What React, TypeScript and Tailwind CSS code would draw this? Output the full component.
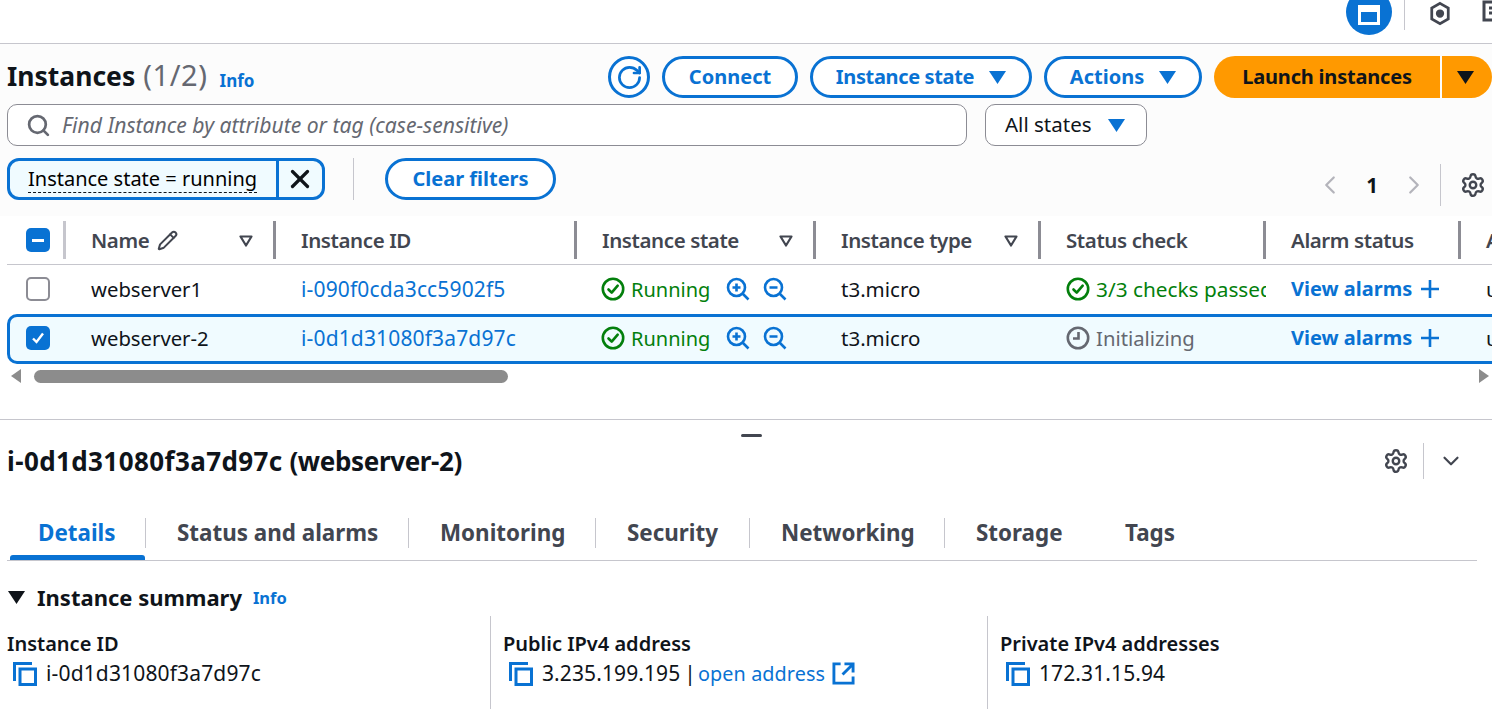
import { Settings, ChevronLeft, ChevronRight, ChevronDown, Pencil, Search, X, RotateCw } from "lucide-react";
import type { ReactNode } from "react";

const Caret = ({ className = "" }: { className?: string }) => (
  <svg viewBox="0 0 17 13" className={`w-[17px] h-[13px] shrink-0 ${className}`} fill="currentColor">
    <path d="M0 0h17L8.5 13z" />
  </svg>
);

const SortCaret = () => (
  <svg viewBox="0 0 14 12" className="w-[14px] h-[12px] text-[#424650] translate-y-[1px]" fill="none" stroke="currentColor" strokeWidth="2.2">
    <path d="M1.5 1.5h11L7 10.5z" strokeLinejoin="round" />
  </svg>
);

const CheckCircle = () => (
  <svg viewBox="0 0 24 24" className="w-[24px] h-[24px] shrink-0" fill="none" stroke="#037f0c" strokeWidth="2.6">
    <circle cx="12" cy="12" r="10.2" />
    <path d="M7.5 12.5l3.2 3.2 6-7" strokeLinecap="round" strokeLinejoin="round" />
  </svg>
);

const ZoomIcon = ({ plus }: { plus?: boolean }) => (
  <svg viewBox="0 0 24 24" className="w-[24px] h-[24px] shrink-0" fill="none" stroke="#0972d3" strokeWidth="2.6">
    <circle cx="10.5" cy="10.5" r="8.5" />
    <path d="M17 17l5.5 5.5M6.5 10.5h8" />
    {plus && <path d="M10.5 6.5v8" />}
  </svg>
);

const CopyIcon = () => (
  <svg viewBox="0 0 24 24" className="w-[24px] h-[24px] shrink-0" fill="none" stroke="#0972d3" strokeWidth="3">
    <path d="M1.5 19V1.5H19" />
    <rect x="7" y="7" width="15.5" height="15.5" />
  </svg>
);

const OutlineButton = ({ children, className = "" }: { children: ReactNode; className?: string }) => (
  <div className={`h-[42px] flex items-center justify-center gap-[15px] rounded-full border-[3px] border-[#0972d3] text-[#0972d3] font-bold text-[20px] bg-white ${className}`}>
    {children}
  </div>
);

const HeaderCell = ({ label, width, sort, icon }: { label: string; width: string; sort?: boolean; icon?: boolean }) => (
  <div className={`${width} shrink-0 flex items-center h-[38px] border-r-[3px] border-[#8c8c94] pl-[25px] pr-[20px] justify-between`}>
    <span className="flex items-center gap-[8px] font-semibold text-[#424650] whitespace-nowrap tracking-[-0.4px]">
      {label}
      {icon && <Pencil size={21} strokeWidth={2.3} />}
    </span>
    {sort && <SortCaret />}
  </div>
);

const Columns = ["w-[210px]", "w-[301px]", "w-[239px]", "w-[225px]", "w-[225px]", "w-[195px]"];

const Row = ({ name, id, selected }: { name: string; id: string; selected?: boolean }) => (
  <div className={`flex items-center whitespace-nowrap ${selected ? "h-[50px] border-y-[3px] border-l-[3px] border-[#0972d3] rounded-l-[10px] bg-[#f0fbff] pl-[16px] pb-[2px]" : "h-[49px] pl-[19px] pb-[1px]"}`}>
    {selected ? (
      <div className="w-[24px] h-[24px] rounded-[5px] bg-[#0972d3] flex items-center justify-center shrink-0">
        <svg viewBox="0 0 16 16" className="w-[16px] h-[16px]" fill="none" stroke="white" strokeWidth="2.4">
          <path d="M3 8.5l3.5 3.5L13 3.5" />
        </svg>
      </div>
    ) : (
      <div className="w-[24px] h-[24px] rounded-[5px] border-2 border-[#8c8c94] bg-white shrink-0" />
    )}
    <div className="w-[41px] shrink-0" />
    <div className="w-[210px] shrink-0 text-[#0f141a] text-[20.3px]">{name}</div>
    <div className="w-[300px] shrink-0 text-[#0972d3] text-[21px] tracking-[0.15px]">{id}</div>
    <div className="w-[240px] shrink-0 flex items-center gap-[6px] text-[#037f0c]">
      <CheckCircle />
      <span className="w-[89px] translate-y-[1px] text-[20px]">Running</span>
      <ZoomIcon plus />
      <span className="w-[1px]" />
      <ZoomIcon />
    </div>
    <div className="w-[225px] shrink-0 text-[#0f141a]">t3.micro</div>
    <div className="w-[225px] shrink-0">
      <div className={`w-[200px] flex items-center gap-[6px] overflow-hidden ${selected ? "text-[#656871]" : "text-[#037f0c]"}`}>
        {selected ? (
          <svg viewBox="0 0 24 24" className="w-[24px] h-[24px] shrink-0" fill="none" stroke="#656871" strokeWidth="2.6">
            <circle cx="12" cy="12" r="10.2" />
            <path d="M12.5 6v6.5H7" />
          </svg>
        ) : (
          <CheckCircle />
        )}
        <span className={selected ? "text-[20.3px]" : "text-[20.8px]"}>{selected ? "Initializing" : "3/3 checks passed"}</span>
      </div>
    </div>
    <div className="w-[195px] shrink-0 flex items-center gap-[8px] font-bold text-[20px] text-[#0972d3]">
      View alarms
      <svg viewBox="0 0 20 20" className="w-[20px] h-[20px]" fill="none" stroke="currentColor" strokeWidth="2.6">
        <path d="M10 1v18M1 10h18" />
      </svg>
    </div>
    <div className="text-[#0f141a]">us</div>
  </div>
);

const tabs = [
  { label: "Details", width: "w-[136px]" },
  { label: "Status and alarms", width: "w-[263px]" },
  { label: "Monitoring", width: "w-[187px]" },
  { label: "Security", width: "w-[154px]" },
  { label: "Networking", width: "w-[195px]" },
  { label: "Storage", width: "w-[149px]" },
  { label: "Tags", width: "w-[100px]" },
];

const SummaryCol = ({ title, children, width, border }: { title: string; children: ReactNode; width: string; border?: boolean }) => (
  <div className={`${width} shrink-0 ${border ? "border-l border-[#c6c6cd] pl-[12px]" : ""}`}>
    <div className="font-semibold text-[20px] text-[#0f141a] mt-[14px] leading-[27px]">{title}</div>
    <div className="flex items-center gap-[9px] text-[#0f141a] pl-[6px] mt-[3px] leading-[27px] whitespace-nowrap">
      <CopyIcon />
      {children}
    </div>
  </div>
);

export default function App() {
  return (
    <div className="w-[1492px] h-[709px] overflow-hidden bg-white text-[20.5px] font-['Noto_Sans',sans-serif] leading-[26px]">
      {/* top bar */}
      <div className="h-[44px] border-b border-[#c6c6cd] flex justify-end items-start overflow-hidden">
        <div className="w-[46px] h-[46px] rounded-full bg-[#0972d3] -mt-[11px] mr-[12px] flex items-center justify-center shrink-0">
          <div className="w-[22px] h-[20px] border-[3px] border-t-[7px] border-white mt-[6px]" />
        </div>
        <div className="w-[1px] h-[30px] bg-[#c6c6cd]" />
        <svg viewBox="0 0 24 26" className="w-[22px] h-[25px] ml-[24px] mt-[1px] shrink-0" fill="none" stroke="#424650" strokeWidth="3">
          <path d="M12 2l9 5v12l-9 5-9-5V7z" />
          <circle cx="12" cy="13" r="3" fill="#424650" />
        </svg>
        <svg viewBox="0 0 24 26" className="w-[24px] h-[26px] ml-[31px] -mr-[14px] shrink-0" fill="none" stroke="#424650" strokeWidth="3">
          <rect x="2" y="2" width="18" height="18" />
          <path d="M7 8h3M7 13h3M14 24h8" />
        </svg>
      </div>

      {/* instances panel */}
      <div className="h-[376px] bg-[#fcfcfc] border-b border-[#c6c6cd] overflow-hidden">
        <div className="flex items-center justify-between pl-[7px] pt-[12px] h-[54px]">
          <div className="flex items-baseline whitespace-nowrap text-[26.5px]">
            <span className="font-bold text-[#0f141a]">Instances</span>
            <span className="text-[#656871] text-[29px] ml-[8px] tracking-[0.6px]">(1/2)</span>
            <span className="text-[#0972d3] text-[17px] font-bold ml-[12px] translate-y-[1px]">Info</span>
          </div>
          <div className="flex items-center gap-[12px]">
            <div className="w-[42px] h-[42px] rounded-full border-[3px] border-[#0972d3] flex items-center justify-center bg-white text-[#0972d3]">
              <RotateCw size={27} strokeWidth={2.4} />
            </div>
            <OutlineButton className="w-[136px]">Connect</OutlineButton>
            <OutlineButton className="w-[222px]"><span className="tracking-[-0.35px]">Instance state</span> <Caret /></OutlineButton>
            <OutlineButton className="w-[158px]">Actions <Caret /></OutlineButton>
            <div className="flex text-[20px] font-bold text-[#0f141a]">
              <div className="w-[226px] h-[42px] bg-[#ff9900] rounded-l-full flex items-center justify-center tracking-[-0.2px]">Launch instances</div>
              <div className="w-[50px] h-[42px] ml-[2px] bg-[#ff9900] rounded-r-full flex items-center pl-[15px]"><Caret /></div>
            </div>
          </div>
        </div>

        <div className="flex items-center gap-[18px] pl-[7px] mt-[6px]">
          <div className="w-[960px] h-[42px] rounded-[10px] border border-[#8c8c94] bg-white flex items-center pl-[18px] gap-[11px]">
            <Search size={25} strokeWidth={2.6} className="text-[#656871]" />
            <span className="italic text-[21.1px] text-[#656871]">Find Instance by attribute or tag (case-sensitive)</span>
          </div>
          <div className="w-[162px] h-[42px] rounded-[10px] border border-[#8c8c94] bg-white flex items-center pl-[19px] pb-[2px] gap-[16px] text-[#0f141a]">
            All states <Caret className="text-[#0972d3] translate-y-[1px]" />
          </div>
        </div>

        <div className="flex items-center pl-[7px] mt-[12px] h-[42px]">
          <div className="w-[318px] h-[42px] rounded-[12px] border-[3px] border-[#0972d3] bg-[#f0fbff] flex items-center overflow-hidden">
            <div className="flex-1 pl-[18px] text-[20px]"><span className="border-b border-dashed border-[#0f141a] whitespace-nowrap">Instance state = running</span></div>
            <div className="w-[46px] h-full border-l-[3px] border-[#0972d3] flex items-center justify-center text-[#0f141a]">
              <X size={30} strokeWidth={2.6} className="-ml-[2px]" />
            </div>
          </div>
          <div className="w-[1px] h-[42px] bg-[#c6c6cd] ml-[28px]" />
          <OutlineButton className="w-[171px] ml-[31px]">Clear filters</OutlineButton>
          <div className="flex items-center ml-auto mt-[12px] text-[#0f141a]">
            <ChevronLeft size={30} strokeWidth={1.8} className="text-[#b4b4bb]" />
            <span className="w-[54px] text-center font-bold">1</span>
            <ChevronRight size={30} strokeWidth={1.8} className="text-[#b4b4bb]" />
            <div className="w-[1px] h-[42px] bg-[#c6c6cd] ml-[11px]" />
            <Settings size={26} strokeWidth={2.2} className="text-[#424650] ml-[19px] mr-[6px]" />
          </div>
        </div>

        {/* table */}
        <div className="mt-[16px] bg-white pl-[7px] w-[1492px] overflow-hidden">
          <div className="flex items-center h-[49px] border-b border-[#c6c6cd]">
            <div className="w-[59px] shrink-0 h-[38px] border-r-[3px] border-[#c6c6cd] pl-[19px] flex items-center">
              <div className="w-[24px] h-[24px] rounded-[5px] bg-[#0972d3] flex items-center justify-center">
                <div className="w-[12px] h-[3px] bg-white" />
              </div>
            </div>
            <HeaderCell label="Name" width={Columns[0]} sort icon />
            <HeaderCell label="Instance ID" width={Columns[1]} />
            <HeaderCell label="Instance state" width={Columns[2]} sort />
            <HeaderCell label="Instance type" width={Columns[3]} sort />
            <HeaderCell label="Status check" width={Columns[4]} />
            <HeaderCell label="Alarm status" width={Columns[5]} />
            <span className="font-semibold text-[#424650] pl-[25px]">A</span>
          </div>
          <Row name="webserver1" id="i-090f0cda3cc5902f5" />
          <Row name="webserver-2" id="i-0d1d31080f3a7d97c" selected />
        </div>

        {/* scrollbar */}
        <div className="flex items-center h-[22px] pt-[2px] bg-white pl-[11px] pr-[3px]">
          <svg viewBox="0 0 10 14" className="w-[10px] h-[14px] text-[#8c8c8c]" fill="currentColor"><path d="M10 0v14L0 7z" /></svg>
          <div className="w-[474px] h-[13px] rounded-full bg-[#8c8c8c] ml-[13px]" />
          <svg viewBox="0 0 10 14" className="w-[10px] h-[14px] text-[#8c8c8c] ml-auto" fill="currentColor"><path d="M0 0v14L10 7z" /></svg>
        </div>
        <div className="h-full bg-white" />
      </div>

      {/* details panel */}
      <div className="bg-white">
        <div className="flex justify-center h-[17px] items-end pl-[10px]">
          <div className="w-[21px] h-[3px] bg-[#424650] rounded-full" />
        </div>
        <div className="flex items-center justify-between pl-[7px] pr-[28px] mt-[5px] h-[38px]">
          <span className="font-bold text-[26px] text-[#0f141a] whitespace-nowrap">
            <span className="tracking-[0.4px]">i-0d1d31080f3a7d97c</span> <span className="tracking-[-0.35px]">(webserver-2)</span>
          </span>
          <div className="flex items-center text-[#424650]">
            <Settings size={26} strokeWidth={2.2} className="translate-x-[1px]" />
            <div className="w-[1px] h-[36px] bg-[#c6c6cd] ml-[15px] mr-[14px]" />
            <ChevronDown size={26} strokeWidth={2} />
          </div>
        </div>

        <div className="mx-[7px] w-[1470px] border-b border-[#c6c6cd] flex h-[67px] mt-[14px] pl-[3px] items-start pt-[14px] text-[22.4px]">
          {tabs.map((t, i) => (
            <div key={t.label} className={`${t.width} shrink-0 h-[52px] relative font-bold`}>
              <div className={`h-[30px] mt-[10px] w-full flex items-center whitespace-nowrap ${i === 0 ? "pl-[28px] text-[#0972d3]" : "pl-[31px] text-[#424650]"} ${i < 5 ? "border-r border-[#c6c6cd]" : ""}`}>{t.label}</div>
              {i === 0 && <div className="absolute left-0 right-[1px] bottom-0 h-[5px] bg-[#0972d3] rounded-t-[3px]" />}
            </div>
          ))}
        </div>

        <div className="flex items-center pl-[8px] mt-[23px] h-[26px]">
          <Caret className="text-[#0f141a]" />
          <span className="font-bold text-[22px] text-[#0f141a] ml-[12px]">Instance summary</span>
          <span className="font-bold text-[16.5px] text-[#0972d3] ml-[11px] translate-y-[1px]">Info</span>
        </div>

        <div className="flex pl-[7px] mt-[6px] h-[100px]">
          <SummaryCol title="Instance ID" width="w-[483px]"><span className="text-[21px] tracking-[0.15px]">i-0d1d31080f3a7d97c</span></SummaryCol>
          <SummaryCol title="Public IPv4 address" width="w-[497px]" border>
            <span className="text-[21px] tracking-[0.1px]">3.235.199.195<span className="ml-[4px] mr-[2px]">|</span><span className="text-[#0972d3] text-[19.8px]">open address</span></span>
            <svg viewBox="0 0 24 24" className="w-[23px] h-[23px] -ml-[2px]" fill="none" stroke="#0972d3" strokeWidth="3">
              <path d="M9 2H2v20h20v-7M13 2h9v9M22 2L11 13" />
            </svg>
          </SummaryCol>
          <SummaryCol title="Private IPv4 addresses" width="w-[400px]" border><span className="text-[21px] tracking-[0.1px]">172.31.15.94</span></SummaryCol>
        </div>
      </div>
    </div>
  );
}
